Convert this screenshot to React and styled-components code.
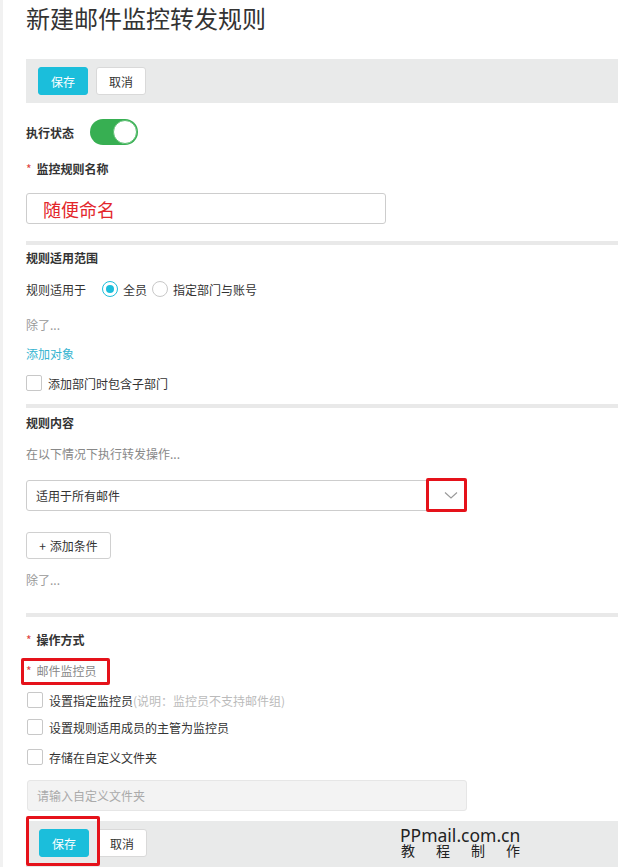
import React from "react";
import styled, { createGlobalStyle } from "styled-components";

const Global = createGlobalStyle`
  html, body { margin: 0; padding: 0; background: #fff; }
  body { font-family: "Noto Sans CJK SC", "Noto Sans", sans-serif; color: #333; font-size: 12px; }
  * { box-sizing: border-box; }
`;

const Page = styled.div`
  width: 618px;
  min-height: 867px;
  height: 867px;
  overflow: hidden;
  border-left: 3px solid #f1f1f1;
  padding-left: 23px;
  display: flex;
  flex-direction: column;
`;

const Title = styled.h1`
  margin: 2px 0 0;
  font-size: 24px;
  line-height: 32px;
  font-weight: 400;
  color: #333;
`;

const Toolbar = styled.div`
  position: relative;
  margin-top: ${(p) => p.$mt}px;
  height: ${(p) => p.$h}px;
  background: #e9eaea;
  padding: 8px 0 0 ${(p) => p.$pl}px;
  display: flex;
  align-items: flex-start;
  gap: 8px;
  flex-shrink: 0;
`;

const Button = styled.button`
  height: 28px;
  width: 50px;
  border-radius: 3px;
  font-family: inherit;
  font-size: 12px;
  padding: 0;
  cursor: pointer;
  border: 1px solid ${(p) => (p.$primary ? "#1bbedb" : "#d9d9d9")};
  background: ${(p) => (p.$primary ? "#1bbedb" : "#fff")};
  color: ${(p) => (p.$primary ? "#fff" : "#333")};
`;

const Row = styled.div`
  display: flex;
  align-items: center;
  margin-top: ${(p) => p.$mt || 0}px;
  height: ${(p) => p.$h || 20}px;
  gap: ${(p) => p.$gap || 0}px;
  flex-shrink: 0;
`;

const Label = styled.span`
  font-size: 12px;
  font-weight: ${(p) => (p.$bold ? 700 : 400)};
  color: ${(p) => p.$color || "#333"};
`;

const Star = styled.span`
  color: #e0443e;
  font-size: 12px;
  margin-right: 5px;
`;

const Toggle = styled.div`
  width: 48px;
  height: 26px;
  border-radius: 13px;
  background: #37af52;
  display: flex;
  align-items: center;
  justify-content: flex-end;
  padding: 1px;
`;

const Knob = styled.div`
  width: 24px;
  height: 24px;
  border-radius: 50%;
  background: #fff;
  border: 1px solid #5dbf72;
`;

const TextInput = styled.div`
  margin-top: ${(p) => p.$mt}px;
  margin-left: ${(p) => p.$ml || 0}px;
  width: ${(p) => p.$w}px;
  height: 31px;
  border: 1px solid ${(p) => (p.$disabled ? "#e6e6e6" : "#cdcdcd")};
  background: ${(p) => (p.$disabled ? "#f3f3f3" : "#fff")};
  border-radius: 3px;
  display: flex;
  align-items: center;
  padding-left: ${(p) => p.$pl}px;
  flex-shrink: 0;
  font-size: ${(p) => p.$fs}px;
  color: ${(p) => p.$color};
  position: relative;
`;

const Separator = styled.div`
  margin-top: ${(p) => p.$mt}px;
  height: 4px;
  background: #e9e9e9;
  flex-shrink: 0;
`;

const Radio = styled.span`
  width: 16px;
  height: 16px;
  border-radius: 50%;
  border: 1px solid ${(p) => (p.$checked ? "#1bbedb" : "#c8c8c8")};
  display: inline-flex;
  align-items: center;
  justify-content: center;
  margin: 0 5px 0 ${(p) => p.$ml || 0}px;
  &::after {
    content: "";
    width: 8px;
    height: 8px;
    border-radius: 50%;
    background: ${(p) => (p.$checked ? "#1bbedb" : "transparent")};
  }
`;

const Checkbox = styled.span`
  width: 16px;
  height: 16px;
  border: 1px solid #c8c8c8;
  border-radius: 2px;
  background: #fff;
  margin: 0 6px 0 ${(p) => p.$ml || 0}px;
  flex-shrink: 0;
`;

const Link = styled.span`
  color: #35b4d0;
  font-size: 12px;
`;

const Chevron = styled.svg`
  position: absolute;
  right: 7px;
  top: 10px;
`;

const RedFrame = styled.div`
  position: absolute;
  border: 3px solid #e5121a;
  border-radius: 2px;
  left: ${(p) => p.$l}px;
  top: ${(p) => p.$t}px;
  width: ${(p) => p.$w}px;
  height: ${(p) => p.$h}px;
  pointer-events: none;
`;

const AddButton = styled.div`
  margin-top: 21px;
  width: 85px;
  height: 27px;
  border: 1px solid #d0d0d0;
  border-radius: 3px;
  display: flex;
  align-items: center;
  justify-content: center;
  font-size: 12px;
  color: #333;
  flex-shrink: 0;
  gap: 4px;
`;

const Annotated = styled.div`
  position: relative;
  display: flex;
  align-items: center;
`;

const Watermark = styled.div`
  position: absolute;
  left: 374px;
  top: 5px;
  width: 124px;
  font-family: "Noto Sans", "Noto Sans CJK SC", sans-serif;
  color: #222;
  display: flex;
  flex-direction: column;
`;

const WmLine = styled.div`
  font-size: ${(p) => p.$fs}px;
  line-height: ${(p) => p.$lh}px;
  height: ${(p) => p.$lh}px;
  display: flex;
  justify-content: ${(p) => (p.$spread ? "space-between" : "flex-start")};
  padding: ${(p) => (p.$spread ? "0 4px 0 1px" : "0")};
`;

export default function App() {
  return (
    <>
      <Global />
      <Page>
        <Title>新建邮件监控转发规则</Title>
        <Toolbar $mt={25} $h={44} $pl={12}>
          <Button $primary>保存</Button>
          <Button>取消</Button>
        </Toolbar>

        <Row $mt={16} $h={26} $gap={16}>
          <Label $bold>执行状态</Label>
          <Toggle>
            <Knob />
          </Toggle>
        </Row>

        <Row $mt={13}>
          <Star>*</Star>
          <Label $bold>监控规则名称</Label>
        </Row>
        <TextInput $mt={15} $w={360} $pl={16} $fs={18} $color="#e3262b">
          随便命名
        </TextInput>

        <Separator $mt={17} />
        <Row $mt={2}>
          <Label $bold>规则适用范围</Label>
        </Row>
        <Row $mt={12}>
          <Label>规则适用于</Label>
          <Radio $checked $ml={16} />
          <Label>全员</Label>
          <Radio $ml={5} />
          <Label>指定部门与账号</Label>
        </Row>
        <Row $mt={15}>
          <Label $color="#999">除了...</Label>
        </Row>
        <Row $mt={9}>
          <Link>添加对象</Link>
        </Row>
        <Row $mt={10}>
          <Checkbox />
          <Label>添加部门时包含子部门</Label>
        </Row>

        <Separator $mt={11} />
        <Row $mt={4}>
          <Label $bold>规则内容</Label>
        </Row>
        <Row $mt={11}>
          <Label $color="#888">在以下情况下执行转发操作...</Label>
        </Row>
        <TextInput $mt={17} $w={440} $pl={9} $fs={12} $color="#333">
          适用于所有邮件
          <Chevron width="14" height="9" viewBox="0 0 14 9">
            <path d="M1 1.5 L7 7 L13 1.5" fill="none" stroke="#999" strokeWidth="1.1" />
          </Chevron>
          <RedFrame $l={399} $t={-3} $w={41} $h={34} />
        </TextInput>
        <AddButton>
          <span>+</span>
          <span>添加条件</span>
        </AddButton>
        <Row $mt={10}>
          <Label $color="#999">除了...</Label>
        </Row>

        <Separator $mt={24} />
        <Row $mt={12}>
          <Star>*</Star>
          <Label $bold>操作方式</Label>
        </Row>
        <Row $mt={11}>
          <Annotated>
            <Star>*</Star>
            <Label $color="#888">邮件监控员</Label>
            <RedFrame $l={-5} $t={-4} $w={89} $h={27} />
          </Annotated>
        </Row>
        <Row $mt={10}>
          <Checkbox $ml={1} />
          <Label>设置指定监控员</Label>
          <Label $color="#bbb">(说明：监控员不支持邮件组)</Label>
        </Row>
        <Row $mt={7}>
          <Checkbox $ml={1} />
          <Label>设置规则适用成员的主管为监控员</Label>
        </Row>
        <Row $mt={10}>
          <Checkbox $ml={1} />
          <Label>存储在自定义文件夹</Label>
        </Row>
        <TextInput $mt={13} $ml={1} $w={440} $pl={9} $fs={12} $color="#aaa" $disabled>
          请输入自定义文件夹
        </TextInput>

        <Toolbar $mt={10} $h={48} $pl={13}>
          <Button $primary>保存</Button>
          <Button>取消</Button>
          <RedFrame $l={0} $t={-5} $w={74} $h={50} />
          <Watermark>
            <WmLine $fs={17.5} $lh={18}>PPmail.com.cn</WmLine>
            <WmLine $fs={14} $lh={14} $spread>
              <span>教</span>
              <span>程</span>
              <span>制</span>
              <span>作</span>
            </WmLine>
          </Watermark>
        </Toolbar>
      </Page>
    </>
  );
}
